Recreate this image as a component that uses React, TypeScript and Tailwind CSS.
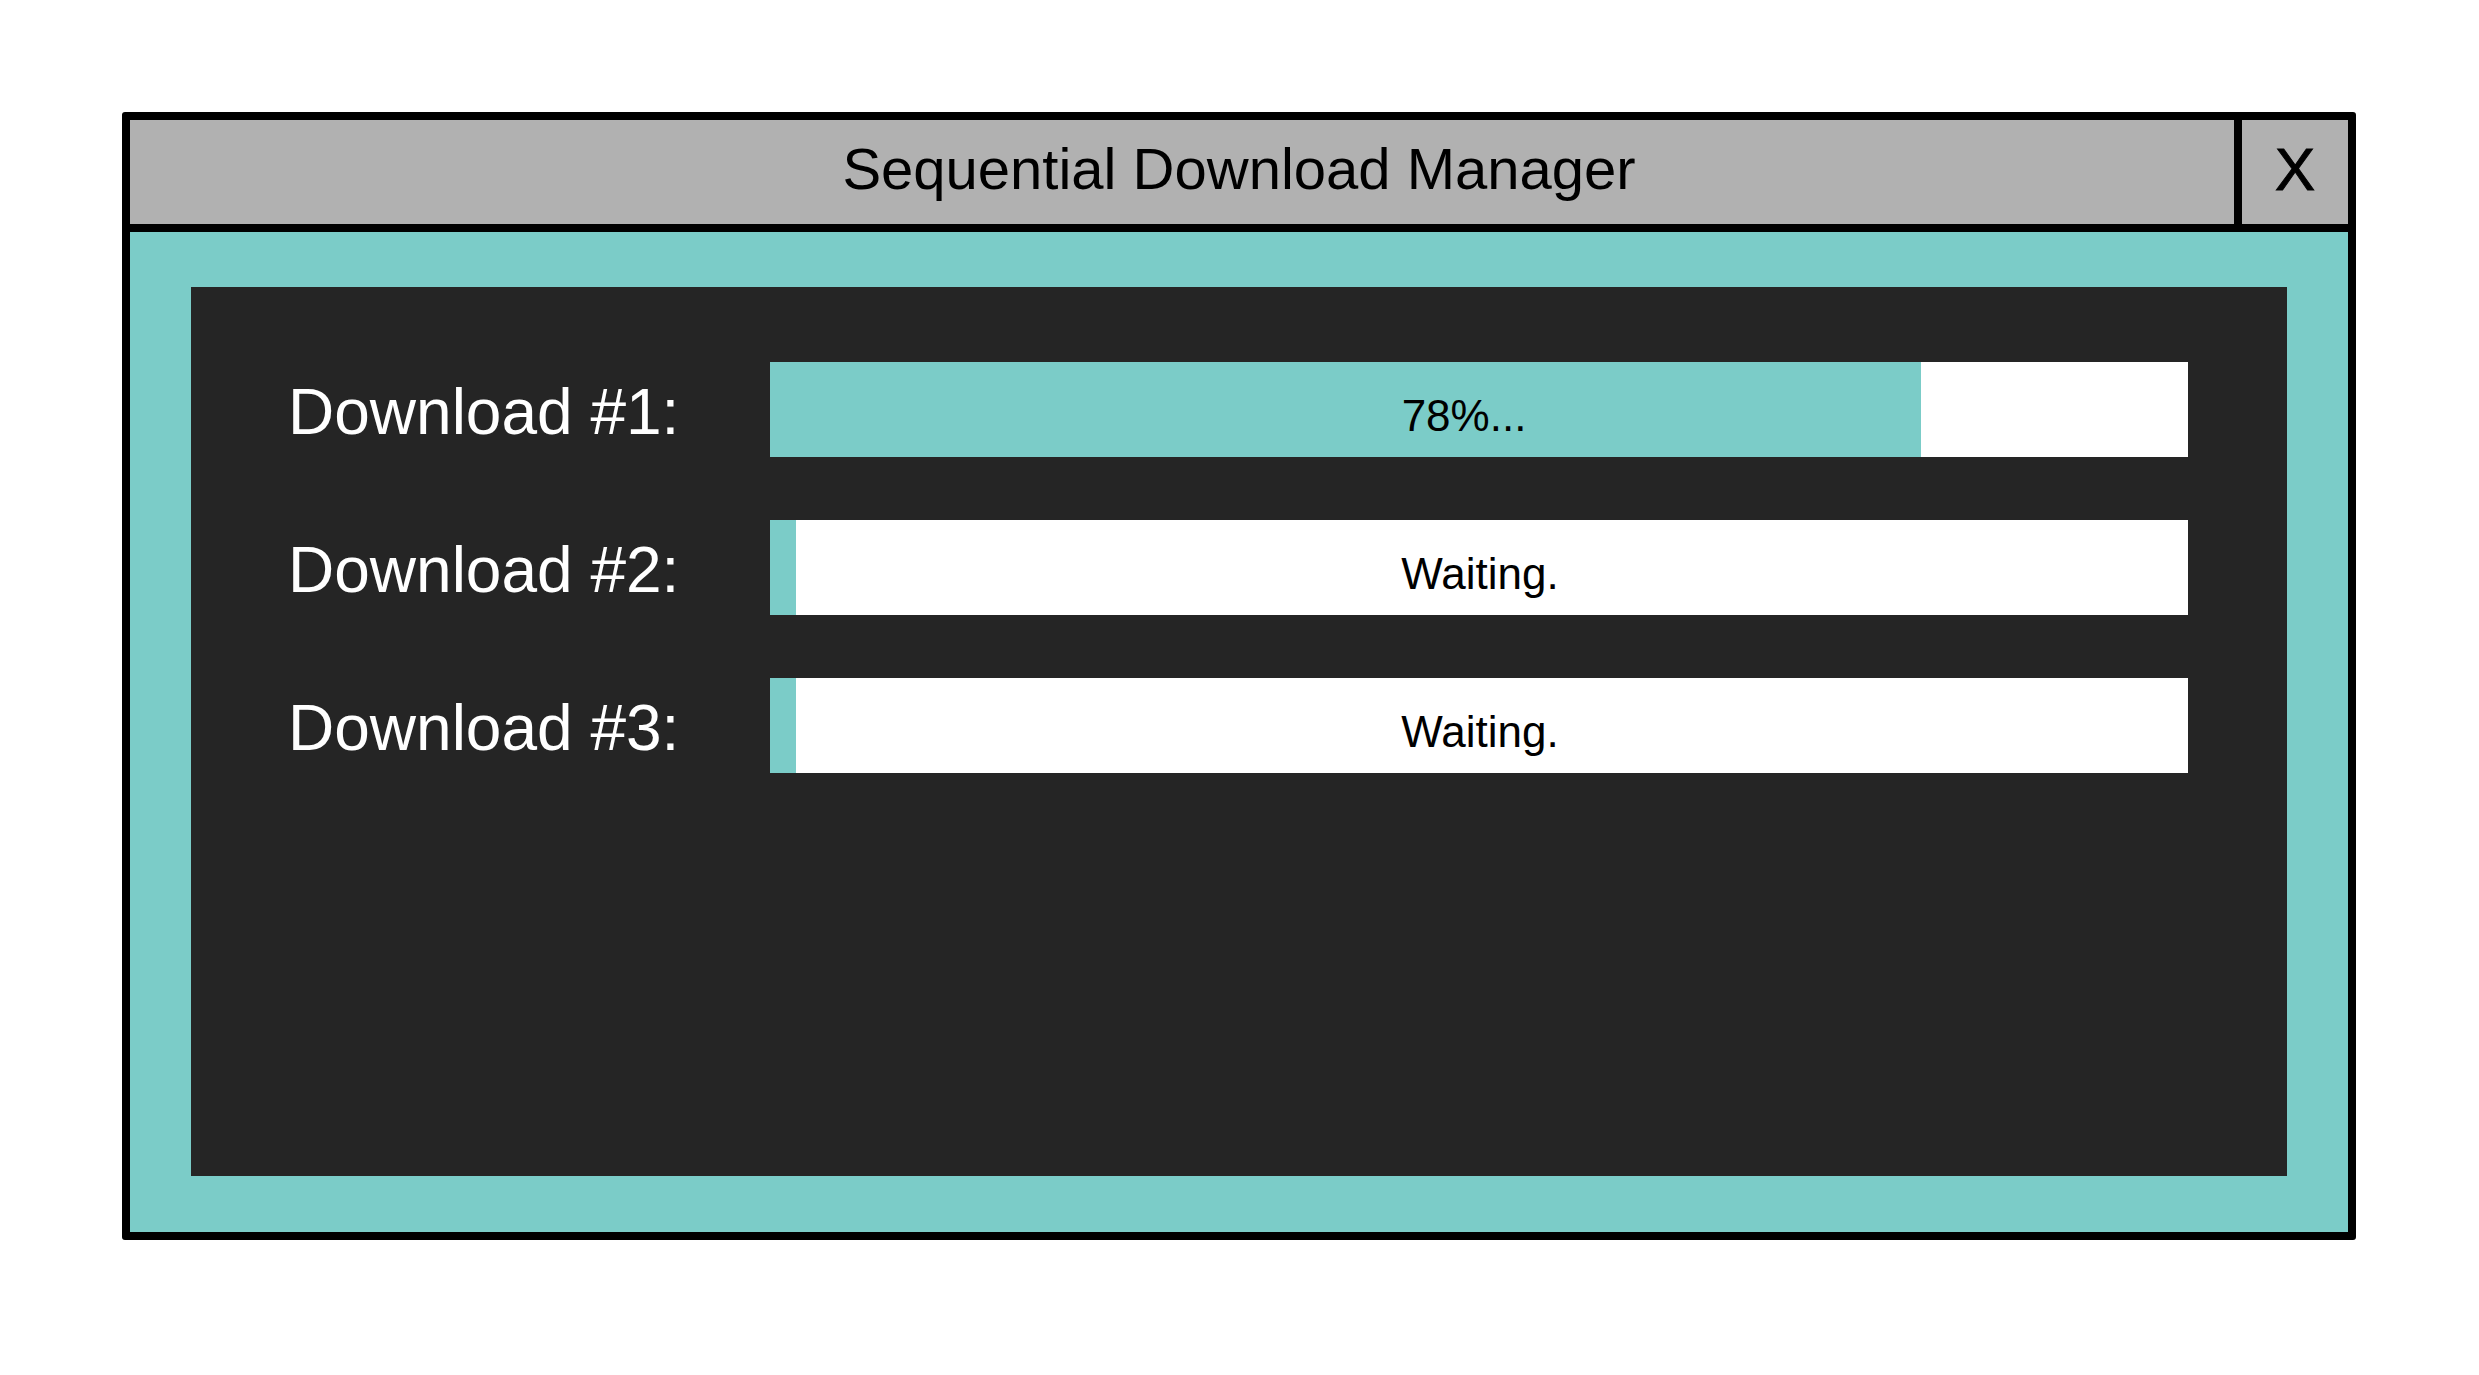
import React from "react";

interface Download {
  id: number;
  progress: number;
  label: string;
}

const downloads: Download[] = [
  { id: 1, progress: 81.2, label: "78%..." },
  { id: 2, progress: 1.8, label: "Waiting." },
  { id: 3, progress: 1.8, label: "Waiting." },
];

const ProgressBar: React.FC<{ item: Download }> = ({ item }) => {
  return (
    <div className="relative h-[95px] w-[1418px] bg-white">
      {/* fill */}
      <div
        className="absolute inset-y-0 left-0 bg-[#7bccc8]"
        style={{ width: `${item.progress}%` }}
      />
      <div
        className={`relative flex h-full items-center justify-center pt-[13px] text-[44px] leading-none text-black ${
          item.id === 1 ? "pr-[30px]" : "pl-[2px]"
        }`}
      >
        {item.label}
      </div>
    </div>
  );
};

export default function App() {
  return (
    <div
      className="min-h-screen bg-white pl-[122px] pt-[112px]"
      style={{ fontFamily: '"Liberation Sans", Arial, sans-serif' }}
    >
      <div className="w-[2234px] overflow-hidden rounded-[3px] border-[8px] border-black">
        {/* Title bar */}
        <div className="flex h-[112px] border-b-[8px] border-black bg-[#b1b1b1]">
          <div className="flex flex-1 items-center justify-center pb-[6px] pl-[114px] text-[58px] leading-none text-black">
            Sequential Download Manager
          </div>
          <div className="flex w-[114px] items-center justify-center border-l-[8px] border-black pb-[4px] text-[60px] leading-none text-black [-webkit-text-stroke:1px_black]">
            X
          </div>
        </div>

        {/* Body */}
        <div className="bg-[#7bccc8] pb-[56px] pl-[61px] pr-[61px] pt-[55px]">
          <div className="h-[889px] bg-[#252525] pl-[97px] pr-[99px] pt-[75px]">
            <div className="flex flex-col gap-[63px]">
              {downloads.map((d) => (
                <div key={d.id} className="flex h-[95px] items-center">
                  <div className="w-[482px] pt-[4px] text-[64px] leading-none text-white">
                    Download #{d.id}:
                  </div>
                  <ProgressBar item={d} />
                </div>
              ))}
            </div>
          </div>
        </div>
      </div>
    </div>
  );
}
